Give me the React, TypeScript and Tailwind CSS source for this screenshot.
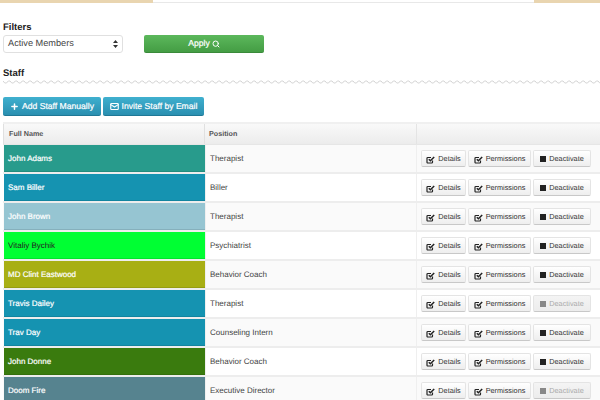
import React from "react";
import { Plus, Mail, Search } from "lucide-react";

const rows = [
  { name: "John Adams", pos: "Therapist", color: "bg-[#289b8c]", text: "text-white", off: false },
  { name: "Sam Biller", pos: "Biller", color: "bg-[#1593b1]", text: "text-white", off: false },
  { name: "John Brown", pos: "Therapist", color: "bg-[#96c5d2]", text: "text-white", off: false },
  { name: "Vitaliy Bychik", pos: "Psychiatrist", color: "bg-[#00ff33]", text: "text-[#222]", off: false },
  { name: "MD Clint Eastwood", pos: "Behavior Coach", color: "bg-[#a8af14]", text: "text-white", off: false },
  { name: "Travis Dailey", pos: "Therapist", color: "bg-[#1593b1]", text: "text-white", off: true },
  { name: "Trav Day", pos: "Counseling Intern", color: "bg-[#1593b1]", text: "text-white", off: false },
  { name: "John Donne", pos: "Behavior Coach", color: "bg-[#3a7b0e]", text: "text-white", off: false },
  { name: "Doom Fire", pos: "Executive Director", color: "bg-[#56838f]", text: "text-white", off: true },
];

function CheckSquare() {
  return (
    <svg width="9" height="9" viewBox="0 0 9 9" fill="none" className="shrink-0 text-[#222]" aria-hidden="true">
      <path d="M6.5 5.5V7.2a.8.8 0 0 1-.8.8H1.8A.8.8 0 0 1 1 7.2V3.3a.8.8 0 0 1 .8-.8H5" stroke="currentColor" strokeWidth="1.2" />
      <path d="M2.8 4.2 L4.4 5.8 L8.2 2" stroke="currentColor" strokeWidth="1.5" />
    </svg>
  );
}

function Btn({ children, dim, w }: { children: React.ReactNode; dim?: boolean; w: string }) {
  return (
    <div
      className={`${w} h-[17px] pt-[1px] flex items-center justify-center gap-[3px] rounded-[2px] border border-[#e4e4e4] border-b-[#c8c8c8] bg-gradient-to-b text-[7.3px] ${dim ? "text-[#aaa] from-[#f4f4f4] to-[#ececec]" : "text-[#333] from-white to-[#eeeeee]"}`}
    >
      {children}
    </div>
  );
}

export default function App() {
  return (
    <div className="w-[600px] h-[400px] overflow-hidden bg-white font-['Liberation_Sans',sans-serif] text-[#333] [text-rendering:geometricPrecision]">
      <div className="h-[3px] flex border-b border-[#e8e8e8]">
        <div className="w-[153px] h-[3px] bg-[#e9d5b0]" />
        <div className="flex-1" />
        <div className="w-[66px] h-[3px] bg-[#e9d5b0]" />
      </div>

      <div className="pl-[3px]">
        <h2 className="mt-[19px] h-[12px] leading-[12px] text-[9.5px] font-bold text-[#222]">Filters</h2>
        <div className="mt-[1px] flex items-start">
          <div className="w-[120px] h-[18px] flex items-center justify-between pl-[4px] pr-[4px] bg-white border border-[#e0e0e0] rounded-[3px] text-[9.2px] text-[#444]">
            <span>Active Members</span>
            <svg width="5" height="8" viewBox="0 0 5 8" className="text-[#333]" aria-hidden="true">
              <path d="M2.5 0 L5 3 L0 3 Z M2.5 8 L5 5 L0 5 Z" fill="currentColor" />
            </svg>
          </div>
          <div className="ml-[21px] w-[120px] h-[18px] flex items-center justify-center gap-[2px] rounded-[2px] bg-gradient-to-b from-[#5cb85c] to-[#449d44] border-b border-[#3a8a3a] text-white text-[8.6px] [-webkit-text-stroke:0.2px_white]">
            Apply <Search size={8} strokeWidth={3} />
          </div>
        </div>

        <h2 className="mt-[15px] h-[12px] leading-[12px] text-[9.5px] font-bold text-[#222]">Staff</h2>
        <svg className="block mt-0 w-[597px] h-[4px]" aria-hidden="true">
          <defs>
            <pattern id="w" width="7" height="4" patternUnits="userSpaceOnUse">
              <path d="M0 1 L1.75 3 L3.5 3 L5.25 1 L7 1" fill="none" stroke="#d4d4d4" strokeWidth="1" />
            </pattern>
          </defs>
          <rect width="597" height="4" fill="url(#w)" />
        </svg>

        <div className="mt-[13px] flex gap-[2px]">
          <div className="w-[98px] h-[19px] flex items-center justify-center gap-[3px] rounded-[2px] bg-gradient-to-b from-[#3fb0cf] to-[#2a8fb0] border-b border-[#1f7896] text-white text-[8.6px] [-webkit-text-stroke:0.2px_white]">
            <Plus size={9} strokeWidth={4} /> Add Staff Manually
          </div>
          <div className="w-[101px] h-[19px] flex items-center justify-center gap-[3px] rounded-[2px] bg-gradient-to-b from-[#3fb0cf] to-[#2a8fb0] border-b border-[#1f7896] text-white text-[8.6px] [-webkit-text-stroke:0.2px_white]">
            <Mail size={9} strokeWidth={3} /> Invite Staff by Email
          </div>
        </div>

        <div className="mt-[6px] border-t-2 border-[#f0f0f0]">
          <div className="h-[21px] flex border-b border-[#e6e6e6] bg-gradient-to-b from-[#f9f9f9] to-[#ececec] text-[7.2px] font-bold text-[#555]">
            <div className="w-[202px] pl-[5px] flex items-center border-l border-r border-[#e0e0e0]">Full Name</div>
            <div className="w-[212px] pl-[4px] flex items-center border-r border-[#e4e4e4]">Position</div>
            <div className="flex-1" />
          </div>
          {rows.map((r, i) => (
            <div key={r.name} className={`h-[29px] flex border-b-2 border-[#ededed] ${i % 2 === 0 ? "bg-[#fafafa]" : "bg-white"}`}>
              <div className={`w-[201px] ml-[1px] pl-[4px] pt-[1px] flex items-center border-b border-black/10 text-[8px] ${r.color} ${r.text} ${r.text === "text-white" ? "[-webkit-text-stroke:0.2px_white]" : ""}`}>
                {r.name}
              </div>
              <div className="w-[212px] pl-[4px] flex items-center border-l border-r border-[#efefef] text-[8px] text-[#444]">
                {r.pos}
              </div>
              <div className="flex-1 pl-[4px] flex items-center gap-[2px]">
                <Btn w="w-[45px]"><CheckSquare />Details</Btn>
                <Btn w="w-[63px]"><CheckSquare />Permissions</Btn>
                <Btn w="w-[58px]" dim={r.off}>
                  <span className={`w-[6px] h-[6px] ${r.off ? "bg-[#888]" : "bg-[#222]"}`} />
                  Deactivate
                </Btn>
              </div>
            </div>
          ))}
        </div>
      </div>
    </div>
  );
}
